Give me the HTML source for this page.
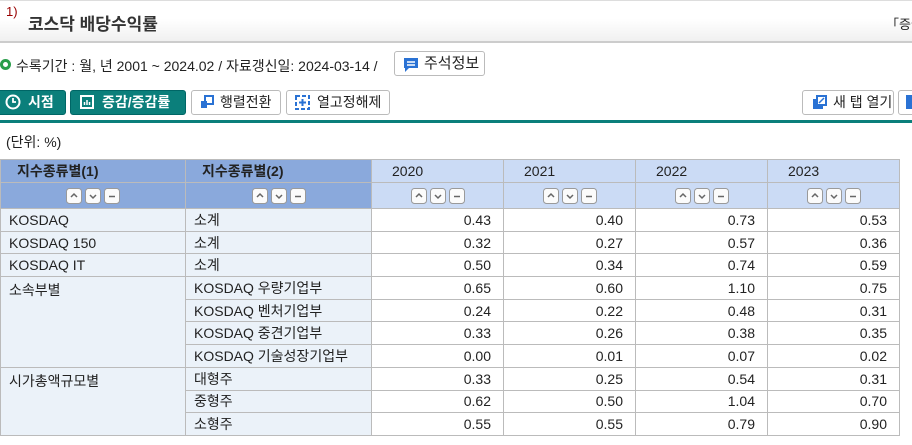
<!DOCTYPE html>
<html><head><meta charset="utf-8"><style>
*{box-sizing:border-box;margin:0;padding:0}
body{width:912px;height:445px;overflow:hidden;background:#fff;font-family:"Liberation Sans","Noto Sans CJK KR",sans-serif;color:#222;position:relative}
.abs{position:absolute}
.title{left:0;top:0;width:912px;height:43px;border-top:1px solid #ddd;border-bottom:2px solid #ccc;background:linear-gradient(#fff 0%,#fff 45%,#f0f0f0 100%)}
.btn{position:absolute;height:25px;border:1px solid #bbb;border-radius:3px;background:#fff;font-size:14px;line-height:23px;padding-left:28px;color:#222;font-weight:bold}
.tb{background:#0b7f7b;border-color:#066;color:#fff}
table{position:absolute;left:0;top:159px;border-collapse:collapse;table-layout:fixed;font-size:14px}
td{border:1px solid #bbb;height:22.7px;padding:0 8px;white-space:nowrap}
td.l{background:#ebf2f9}
td.n{text-align:right;padding-right:12px}
tr.h1 td{height:23px;font-size:14px}
tr.h2 td{height:26px;text-align:center;padding:0}
.hd{background:#8aa9dc;padding-left:16px;font-weight:bold}
.hy{background:#cbdbf5;padding-left:20px}
svg.s{vertical-align:middle;display:inline-block}
</style></head><body>
<div class="abs title"></div>
<div class="abs" style="left:6px;top:4px;font-size:13px;color:#900">1)</div>
<div class="abs" style="left:28px;top:10px;font-size:17px;font-weight:bold;color:#333">코스닥 배당수익률</div>
<div class="abs" style="left:886px;top:14px;font-size:13px;white-space:nowrap">「증권</div>

<div class="abs" style="left:0;top:59px;width:11px;height:11px;border-radius:50%;border:3px solid #2a9d4a;background:#fff"></div>
<div class="abs" style="left:16px;top:56px;font-size:14px;white-space:nowrap">수록기간 : 월, 년 2001 ~ 2024.02 / 자료갱신일: 2024-03-14 /</div>
<div class="btn" style="left:394px;top:51px;width:91px;height:25px;font-weight:normal;font-size:15px;padding-left:29px">주석정보</div>
<svg class="abs" style="left:402px;top:56px" width="18" height="18"><path d="M2 2h14v10H7l-4 4v-4H2z" fill="#2a72d4"/><path d="M5 6h8M5 9h8" stroke="#fff" stroke-width="1.6"/></svg>

<div class="btn tb" style="left:-3px;top:90px;width:69px;padding-left:30px">시점</div>
<svg class="abs" style="left:5px;top:94px" width="16" height="16"><circle cx="8" cy="8" r="6.5" fill="none" stroke="#fff" stroke-width="2"/><path d="M8 4v4h3" stroke="#fff" stroke-width="1.8" fill="none"/></svg>
<div class="btn tb" style="left:70px;top:90px;width:116px;padding-left:31px">증감/증감률</div>
<svg class="abs" style="left:80px;top:95px" width="14" height="14"><rect x="1" y="1" width="12" height="12" fill="none" stroke="#fff" stroke-width="2"/><path d="M4.5 10V7M7 10V5M9.5 10V7" stroke="#fff" stroke-width="1.5"/></svg>
<div class="btn" style="left:191px;top:90px;width:90px;font-weight:normal">행렬전환</div>
<svg class="abs" style="left:200px;top:95px" width="14" height="14"><rect x="5" y="1" width="8" height="8" fill="none" stroke="#2a72d4" stroke-width="2"/><rect x="1" y="6" width="6" height="7" fill="#2a72d4"/></svg>
<div class="btn" style="left:286px;top:90px;width:104px;font-weight:normal;padding-left:30px">열고정해제</div>
<svg class="abs" style="left:295px;top:95px" width="15" height="15"><rect x="1" y="1" width="13" height="13" fill="none" stroke="#2a72d4" stroke-width="2" stroke-dasharray="4 2"/><path d="M4 7.5h7M7.5 4v7" stroke="#2a72d4" stroke-width="2"/></svg>
<div class="btn" style="left:802px;top:90px;width:92px;font-weight:normal;padding-left:30px">새 탭 열기</div>
<svg class="abs" style="left:812px;top:95px" width="15" height="15"><rect x="1" y="4" width="10" height="10" fill="#2a72d4"/><rect x="5" y="1" width="9" height="9" fill="#fff" stroke="#2a72d4" stroke-width="2"/><path d="M7 8l5-5" stroke="#2a72d4" stroke-width="1.5"/></svg>
<div class="btn" style="left:898px;top:90px;width:30px"></div>
<div class="abs" style="left:906px;top:95px;width:8px;height:14px;background:#2a72d4"></div>
<div class="abs" style="left:0;top:120px;width:912px;height:3px;background:#0b7f7b"></div>

<div class="abs" style="left:6px;top:132px;font-size:14px">(단위: %)</div>

<svg width="0" height="0" style="position:absolute"><defs>
<g id="sb"><rect x="0.5" y="0.5" width="15" height="15" rx="3" fill="#fbfbfb" stroke="#9a9a9a"/><path d="M5 9l3-3 3 3" fill="none" stroke="#666" stroke-width="1.5"/>
<rect x="19.5" y="0.5" width="15" height="15" rx="3" fill="#fbfbfb" stroke="#9a9a9a"/><path d="M24 7l3 3 3-3" fill="none" stroke="#666" stroke-width="1.5"/>
<rect x="38.5" y="0.5" width="15" height="15" rx="3" fill="#fbfbfb" stroke="#9a9a9a"/><path d="M43 8.5h6" stroke="#666" stroke-width="1.5"/></g></defs></svg>

<table>
<colgroup><col style="width:185px"><col style="width:186px"><col style="width:132px"><col style="width:132px"><col style="width:132px"><col style="width:132px"></colgroup>
<tr class="h1"><td class="hd">지수종류별(1)</td><td class="hd">지수종류별(2)</td><td class="hy">2020</td><td class="hy">2021</td><td class="hy">2022</td><td class="hy">2023</td></tr>
<tr class="h2"><td class="hd" style="padding:0"><svg class="s" width="54" height="16"><use href="#sb"/></svg></td><td class="hd" style="padding:0"><svg class="s" width="54" height="16"><use href="#sb"/></svg></td><td class="hy" style="padding:0"><svg class="s" width="54" height="16"><use href="#sb"/></svg></td><td class="hy" style="padding:0"><svg class="s" width="54" height="16"><use href="#sb"/></svg></td><td class="hy" style="padding:0"><svg class="s" width="54" height="16"><use href="#sb"/></svg></td><td class="hy" style="padding:0"><svg class="s" width="54" height="16"><use href="#sb"/></svg></td></tr>
<tr><td class="l">KOSDAQ</td><td class="l">소계</td><td class="n">0.43</td><td class="n">0.40</td><td class="n">0.73</td><td class="n">0.53</td></tr>
<tr><td class="l">KOSDAQ 150</td><td class="l">소계</td><td class="n">0.32</td><td class="n">0.27</td><td class="n">0.57</td><td class="n">0.36</td></tr>
<tr><td class="l">KOSDAQ IT</td><td class="l">소계</td><td class="n">0.50</td><td class="n">0.34</td><td class="n">0.74</td><td class="n">0.59</td></tr>
<tr><td class="l" rowspan="4" style="vertical-align:top;padding-top:3px">소속부별</td><td class="l">KOSDAQ 우량기업부</td><td class="n">0.65</td><td class="n">0.60</td><td class="n">1.10</td><td class="n">0.75</td></tr>
<tr><td class="l">KOSDAQ 벤처기업부</td><td class="n">0.24</td><td class="n">0.22</td><td class="n">0.48</td><td class="n">0.31</td></tr>
<tr><td class="l">KOSDAQ 중견기업부</td><td class="n">0.33</td><td class="n">0.26</td><td class="n">0.38</td><td class="n">0.35</td></tr>
<tr><td class="l">KOSDAQ 기술성장기업부</td><td class="n">0.00</td><td class="n">0.01</td><td class="n">0.07</td><td class="n">0.02</td></tr>
<tr><td class="l" rowspan="3" style="vertical-align:top;padding-top:3px">시가총액규모별</td><td class="l">대형주</td><td class="n">0.33</td><td class="n">0.25</td><td class="n">0.54</td><td class="n">0.31</td></tr>
<tr><td class="l">중형주</td><td class="n">0.62</td><td class="n">0.50</td><td class="n">1.04</td><td class="n">0.70</td></tr>
<tr><td class="l">소형주</td><td class="n">0.55</td><td class="n">0.55</td><td class="n">0.79</td><td class="n">0.90</td></tr>
</table>
</body></html>
